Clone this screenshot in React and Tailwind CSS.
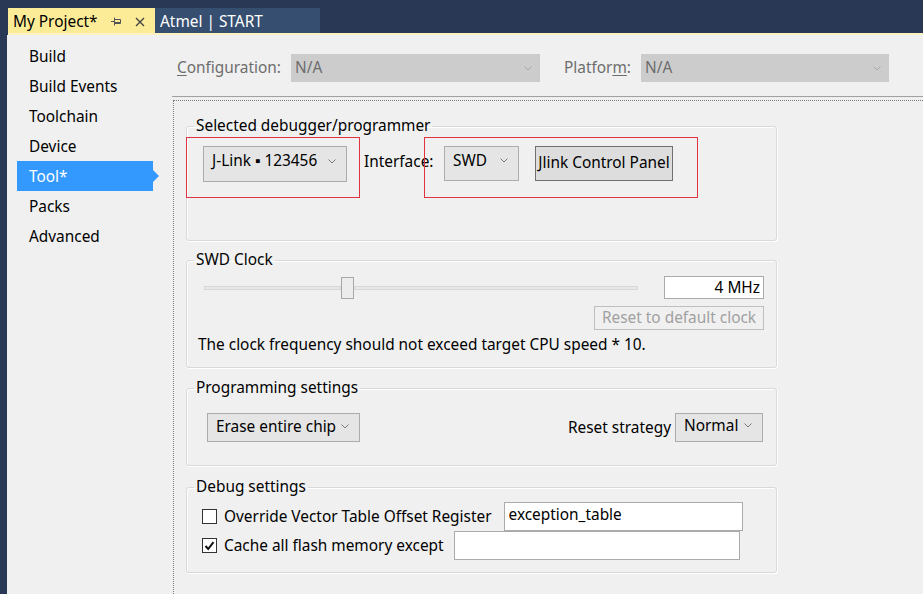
import React from "react";

function Chevron({ color = "#7a7a7a" }) {
  return (
    <svg width="8" height="5" viewBox="0 0 8 5" className="shrink-0">
      <path d="M0.5 0.5 L4 4 L7.5 0.5" fill="none" stroke={color} strokeWidth="1" />
    </svg>
  );
}

function Dropdown({ text, className = "" }) {
  return (
    <div
      className={`flex items-center justify-between border border-[#acacac] bg-[#e5e5e5] pl-[8px] pr-[10px] text-[15.4px] text-black ${className}`}
    >
      <span className="whitespace-nowrap">{text}</span>
      <Chevron />
    </div>
  );
}

function Group({ title, children, className = "" }) {
  return (
    <fieldset
      className={`w-[591px] rounded-[3px] border border-[#d9d9d9] shadow-[inset_1px_1px_0_#ffffff,1px_1px_0_#ffffff] ${className}`}
    >
      <legend className="ml-[7px] px-[2px] pb-[1px] pt-[1px] text-[15.4px] leading-[18px] text-black">{title}</legend>
      {children}
    </fieldset>
  );
}

function Checkbox({ checked }) {
  return (
    <div className="flex h-[15px] w-[15px] shrink-0 items-center justify-center border border-[#333333] bg-white">
      {checked && (
        <svg width="11" height="10" viewBox="0 0 11 10">
          <path d="M1.5 5 L4.2 8 L9.5 1.2" fill="none" stroke="#111" strokeWidth="2" />
        </svg>
      )}
    </div>
  );
}

export default function App() {
  const items = ["Build", "Build Events", "Toolchain", "Device", "Tool*", "Packs", "Advanced"];
  return (
    <div className="flex h-[594px] w-[923px] flex-col overflow-hidden bg-[#293955] font-['Noto_Sans',sans-serif]">
      {/* Tab bar */}
      <div className="flex h-[33px] shrink-0 items-end pl-[8px]">
        <div className="flex h-[25px] w-[147px] items-center bg-[#fdec97] pl-[5px] pt-[2px] text-[15.4px] text-black">
          <span className="whitespace-nowrap">My Project*</span>
          <svg width="11" height="9" viewBox="0 0 11 9" className="ml-[13px]">
            <path d="M0 4.5 H3.5 M3.5 0.5 V8.5" stroke="#555" strokeWidth="1" fill="none" />
            <path d="M3.5 2.5 H9.5 V6.5 H3.5 M3.5 5.5 H9.5" stroke="#555" strokeWidth="1" fill="none" />
          </svg>
          <svg width="10" height="10" viewBox="0 0 10 10" className="ml-[13px]">
            <path d="M1 1 L9 9 M9 1 L1 9" stroke="#444" strokeWidth="1.4" />
          </svg>
        </div>
        <div className="flex h-[25px] w-[165px] items-center bg-[#364e6f] pl-[5px] pt-[2px] text-[15.4px] text-white">
          <span className="whitespace-nowrap">Atmel | START</span>
        </div>
      </div>
      <div className="ml-[8px] h-[2px] shrink-0 bg-[#fdf2c0]" />

      {/* Body */}
      <div className="ml-[7px] flex flex-1 bg-[#f0f0f0]">
        {/* Sidebar */}
        <div className="flex w-[165px] shrink-0 flex-col pt-[6px]">
          {items.map((it) => {
            const sel = it === "Tool*";
            return (
              <div key={it} className="flex h-[30px] items-center">
                <div
                  className={`ml-[10px] flex h-[30px] w-[136px] items-center pl-[12px] pt-[2px] text-[15.4px] ${
                    sel ? "bg-[#3399ff] text-white" : "text-black"
                  }`}
                >
                  {it}
                </div>
                {sel && (
                  <div className="h-0 w-0 border-y-[6px] border-l-[6px] border-y-transparent border-l-[#3399ff]" />
                )}
              </div>
            );
          })}
        </div>

        {/* Main */}
        <div className="flex flex-1 flex-col pt-[18px]">
          <div className="flex h-[28px] items-center pl-[5px] pt-[2px] text-[15.4px] text-[#6d6d6d]">
            <span className="w-[114px] whitespace-nowrap">
              <span className="underline underline-offset-2">C</span>onfiguration:
            </span>
            <div className="flex h-[28px] w-[249px] items-center justify-between bg-[#cccccc] pl-[4px] pr-[8px]">
              <span>N/A</span>
              <Chevron color="#a8a8a8" />
            </div>
            <span className="ml-[24px] w-[77px] whitespace-nowrap">
              Platfor<span className="underline underline-offset-2">m</span>:
            </span>
            <div className="flex h-[28px] w-[248px] items-center justify-between bg-[#cccccc] pl-[4px] pr-[8px]">
              <span>N/A</span>
              <Chevron color="#a8a8a8" />
            </div>
          </div>
          <div className="mt-[15px] h-px bg-[#a0a0a0]" />
          <div className="mt-[3px] ml-[1px] flex flex-1 flex-col border-l border-t border-dotted border-[#7a7a7a] pl-[12px] pt-[15px]">
            {/* Selected debugger */}
            <Group title="Selected debugger/programmer">
              <div className="flex h-[104px] items-start pt-[1px]">
                <div className="-ml-[1px] h-[61px] w-[174px] border border-[#e0323f] pl-[16px] pt-[8px]">
                  <Dropdown text="J-Link ▪ 123456" className="h-[36px] w-[144px] pb-[6px]" />
                </div>
                <span className="mt-[13px] ml-[4px] w-[60px] whitespace-nowrap text-[15.4px] text-black">Interface:</span>
                <div className="flex h-[61px] w-[274px] gap-[16px] border border-[#e0323f] pl-[19px] pt-[8px]">
                  <Dropdown text="SWD" className="h-[35px] w-[75px] pb-[6px]" />
                  <div className="flex h-[35px] w-[138px] items-center justify-center whitespace-nowrap border border-[#707070] bg-[#dddddd] pb-[2px] text-[15.4px] text-black">
                    Jlink Control Panel
                  </div>
                </div>
              </div>
            </Group>

            {/* SWD Clock */}
            <Group title="SWD Clock" className="mt-[9px]">
              <div className="flex h-[97px] flex-col pr-[12px]">
                <div className="mt-[6px] flex h-[23px] items-center">
                  <div className="ml-[17px] flex w-[434px] items-center">
                    <div className="h-[4px] w-[137px] border border-[#d8d8d8] bg-[#e8e8e8]" />
                    <div className="h-[22px] w-[13px] border border-[#a8a8a8] bg-[#ececec]" />
                    <div className="h-[4px] flex-1 border border-[#d8d8d8] bg-[#e8e8e8]" />
                  </div>
                  <div className="ml-auto flex h-[23px] w-[100px] items-center justify-end border border-[#ababab] bg-white pr-[3px] text-[15.4px] text-black">
                    4 MHz
                  </div>
                </div>
                <div className="mt-[7px] flex justify-end">
                  <div className="flex h-[24px] w-[170px] items-center justify-center whitespace-nowrap border border-[#bfbfbf] text-[15.4px] text-[#a0a0a0]">
                    Reset to default clock
                  </div>
                </div>
                <div className="mt-[5px] whitespace-nowrap pl-[11px] text-[15.4px] leading-[20px] text-black">
                  The clock frequency should not exceed target CPU speed * 10.
                </div>
              </div>
            </Group>

            {/* Programming settings */}
            <Group title="Programming settings" className="mt-[10px]">
              <div className="flex h-[67px] items-start pr-[13px] pt-[15px]">
                <Dropdown text="Erase entire chip" className="ml-[20px] h-[29px] w-[153px] pb-[2px]" />
                <span className="ml-auto mr-[4px] mt-[3px] text-[15.4px] text-black">Reset strategy</span>
                <Dropdown text="Normal" className="h-[29px] w-[88px] pb-[4px]" />
              </div>
            </Group>

            {/* Debug settings */}
            <Group title="Debug settings" className="mt-[11px]">
              <div className="flex h-[75px] flex-col pt-[5px]">
                <div className="flex h-[29px] items-center pl-[15px]">
                  <Checkbox />
                  <span className="ml-[7px] whitespace-nowrap text-[15.4px] text-black">Override Vector Table Offset Register</span>
                  <div className="ml-[12px] flex h-[29px] w-[239px] items-center border border-[#ababab] bg-white pb-[4px] pl-[4px] text-[15.4px] text-black">
                    exception_table
                  </div>
                </div>
                <div className="flex h-[29px] items-center pl-[15px]">
                  <Checkbox checked />
                  <span className="ml-[7px] whitespace-nowrap text-[15.4px] text-black">Cache all flash memory except</span>
                  <div className="ml-[10px] h-[29px] w-[286px] border border-[#ababab] bg-white" />
                </div>
              </div>
            </Group>
          </div>
        </div>
      </div>
    </div>
  );
}
